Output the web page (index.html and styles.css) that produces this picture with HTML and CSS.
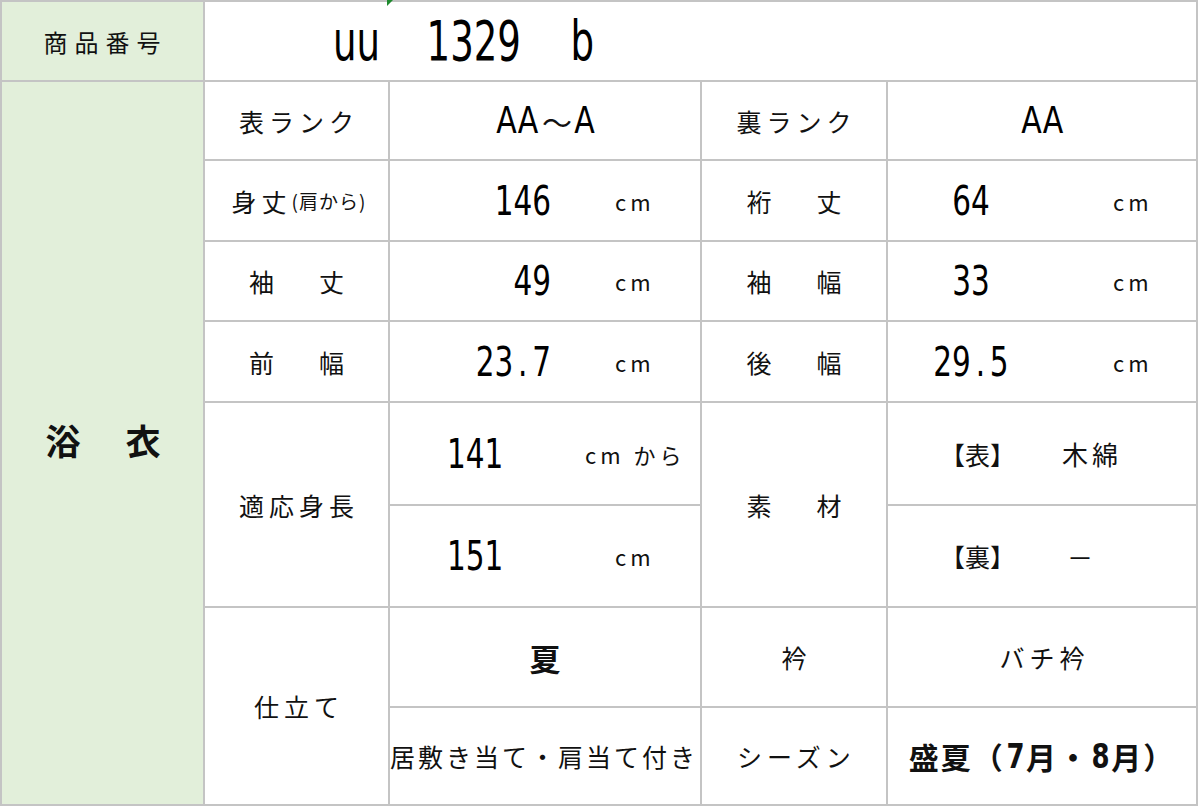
FILE: index.html
```html
<!DOCTYPE html>
<html lang="ja">
<head>
<meta charset="utf-8">
<title>商品情報</title>
<link rel="stylesheet" href="styles.css">
</head>
<body>
<div class="sheet">
  <div class="cell green lbl-head">商品番号</div>
  <div class="cell code span4"><span class="code-inner"><span class="c-uu">uu</span><span class="c-num">1329</span><span class="c-b">b</span></span></div>
  <div class="cell green yukata">浴　衣</div>

  <div class="cell lbl">表ランク</div>
  <div class="cell center"><span class="num rank">AA</span><span class="tilde">～</span><span class="num rank">A</span></div>
  <div class="cell lbl">裏ランク</div>
  <div class="cell center"><span class="num rank">AA</span></div>

  <div class="cell lbl">身丈<span class="small">(肩から)</span></div>
  <div class="cell val3"><span class="num n3">146</span><span class="unit">cm</span></div>
  <div class="cell lbl wide">裄　丈</div>
  <div class="cell val5"><span class="num n5">64</span><span class="unit">cm</span></div>

  <div class="cell lbl wide">袖　丈</div>
  <div class="cell val3"><span class="num n3">49</span><span class="unit">cm</span></div>
  <div class="cell lbl wide">袖　幅</div>
  <div class="cell val5"><span class="num n5">33</span><span class="unit">cm</span></div>

  <div class="cell lbl wide">前　幅</div>
  <div class="cell val3"><span class="num n3">23<span class="dot">.</span>7</span><span class="unit">cm</span></div>
  <div class="cell lbl wide">後　幅</div>
  <div class="cell val5"><span class="num n5">29<span class="dot">.</span>5</span><span class="unit">cm</span></div>

  <div class="cell lbl span2r">適応身長</div>
  <div class="cell val3h"><span class="num nh">141</span><span class="unit u-from">cm から</span></div>
  <div class="cell lbl wide span2r">素　材</div>
  <div class="cell mat"><span class="bracket">【表】</span><span class="mat-val">木綿</span></div>
  <div class="cell val3h"><span class="num nh">151</span><span class="unit u-cm">cm</span></div>
  <div class="cell mat"><span class="bracket">【裏】</span><span class="mat-val dash">－</span></div>

  <div class="cell lbl span2r">仕立て</div>
  <div class="cell center natsu">夏</div>
  <div class="cell lbl">衿</div>
  <div class="cell lbl">バチ衿</div>
  <div class="cell center long">居敷き当て・肩当て付き</div>
  <div class="cell lbl">シーズン</div>
  <div class="cell center season">盛夏（<span class="sn">7</span>月・<span class="sn">8</span>月）</div>

  <span class="marker"></span>
</div>
</body>
</html>
```

FILE: styles.css
```css
html, body {
  margin: 0;
  padding: 0;
  background: #ffffff;
}

body {
  font-family: "Noto Sans CJK JP", "DejaVu Sans", sans-serif;
  color: #111;
}

.sheet {
  position: relative;
  display: grid;
  grid-template-columns: 201px 183px 310px 184px 308px;
  grid-template-rows: 78px 77px 79px 78px 79px 101px 100px 98px 96px;
  gap: 2px;
  padding: 2px;
  width: max-content;
  background: #c4c4c4;
}

.cell {
  background: #ffffff;
  display: flex;
  align-items: center;
  justify-content: center;
  font-size: 25px;
  letter-spacing: 5px;
  white-space: nowrap;
}

.green {
  background: #e2efda;
}

.lbl-head {
  font-size: 24px;
  letter-spacing: 7px;
  padding-left: 6px;
}

.yukata {
  grid-row: span 8;
  font-size: 35px;
  font-weight: 700;
  letter-spacing: 5px;
  padding-left: 6px;
  padding-bottom: 8px;
}

.span4 {
  grid-column: span 4;
}

.span2r {
  grid-row: span 2;
}

.lbl {
  padding-left: 5px;
}

.wide {
  letter-spacing: 10px;
  padding-left: 10px;
}

.small {
  font-size: 19px;
  letter-spacing: 1px;
}

.num {
  display: inline-block;
  font-family: "DejaVu Sans Condensed", "DejaVu Sans", sans-serif;
  font-size: 41px;
  letter-spacing: 0;
  color: #000;
  transform: scaleX(0.8);
}

.dot {
  margin: 0 6px;
}

.code {
  justify-content: flex-start;
  font-family: "DejaVu Sans Condensed", "DejaVu Sans", sans-serif;
  font-size: 55px;
  letter-spacing: 0;
  color: #000;
  padding-left: 128px;
}

.code-inner {
  display: inline-block;
  transform: scaleX(0.75);
  transform-origin: left center;
}

.c-num {
  margin-left: 62px;
}

.c-b {
  margin-left: 66px;
}

.rank {
  font-size: 37px;
  transform: scaleX(0.9);
}

.tilde {
  font-size: 30px;
  letter-spacing: 0;
  margin: 0 1px;
}

.unit {
  font-size: 22px;
  letter-spacing: 4px;
}

.val3 {
  justify-content: flex-start;
}

.n3 {
  width: 161px;
  text-align: right;
  transform-origin: right center;
}

.val3 .unit {
  margin-left: 64px;
}

.val5 {
  justify-content: flex-start;
}

.n5 {
  width: 166px;
  text-align: center;
  transform-origin: center center;
}

.val5 .unit {
  margin-left: 59px;
}

.val3h {
  justify-content: flex-start;
  padding-left: 57px;
}

.nh {
  width: 138px;
  transform-origin: left center;
}

.u-cm {
  margin-left: 30px;
}

.mat {
  justify-content: flex-start;
  padding-left: 52px;
}

.bracket {
  letter-spacing: 0;
  width: 122px;
}

.mat-val {
  letter-spacing: 4px;
  font-size: 26px;
}

.dash {
  padding-left: 5px;
}

.natsu {
  font-size: 31px;
  font-weight: 700;
  letter-spacing: 0;
}

.long {
  font-size: 25px;
  letter-spacing: 3px;
  justify-content: flex-start;
}

.season {
  font-size: 30px;
  font-weight: 700;
  letter-spacing: 2px;
}

.sn {
  display: inline-block;
  font-family: "DejaVu Sans Condensed", "DejaVu Sans", sans-serif;
  font-size: 34px;
  font-weight: 700;
  letter-spacing: 0;
  transform: scaleX(0.85);
}

.marker {
  position: absolute;
  left: 387px;
  top: 0;
  width: 0;
  height: 0;
  border-top: 6px solid #1e8a2e;
  border-right: 6px solid transparent;
}
```
